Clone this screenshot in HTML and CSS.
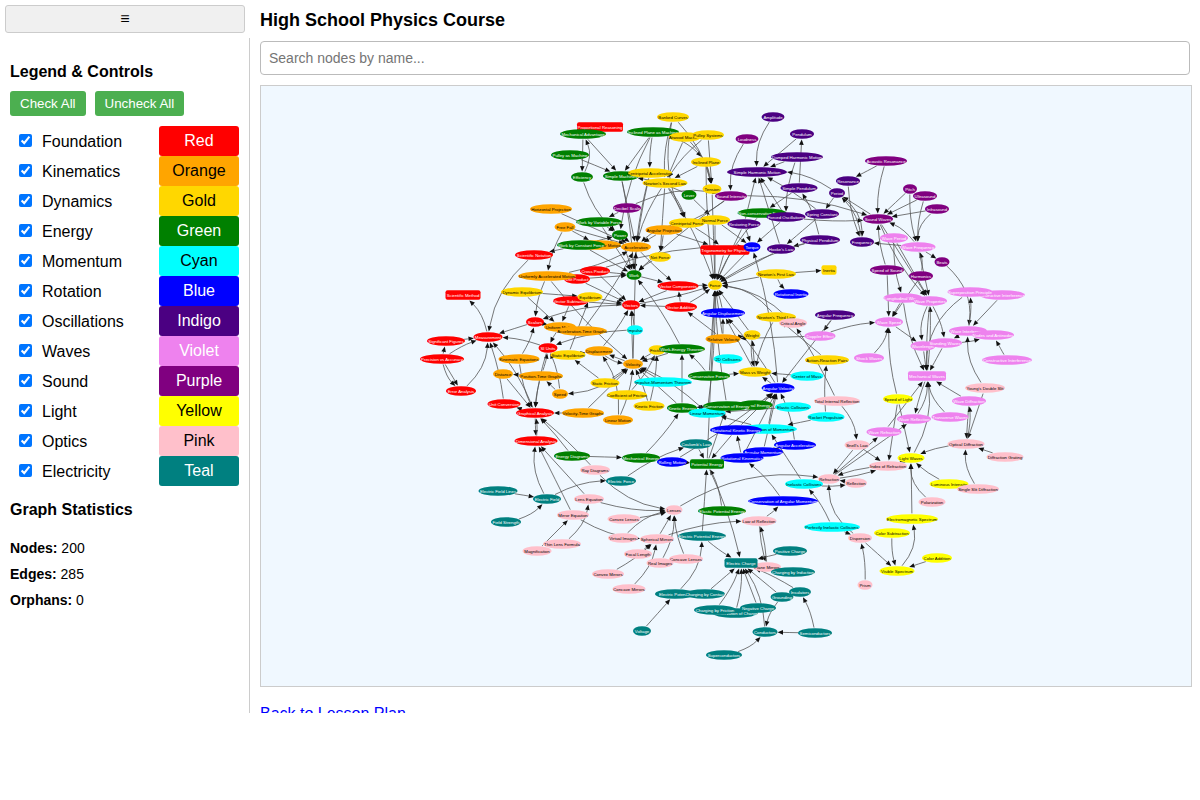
FILE: index.html
```html
<!DOCTYPE html>
<html lang="en">
<head>
<meta charset="utf-8">
<title>High School Physics Course</title>
<link rel="stylesheet" href="styles.css">
</head>
<body>
<div class="app">
  <aside class="sidebar">
    <button class="toggle" type="button">≡</button>
    <div class="panel">
      <h3 class="panel-title">Legend &amp; Controls</h3>
      <div class="actions">
        <button class="action" type="button">Check All</button>
        <button class="action" type="button">Uncheck All</button>
      </div>
      <div class="legend">
        <label class="legend-row"><input type="checkbox" checked><span class="legend-name">Foundation</span><span class="swatch s-red">Red</span></label>
        <label class="legend-row"><input type="checkbox" checked><span class="legend-name">Kinematics</span><span class="swatch s-orange">Orange</span></label>
        <label class="legend-row"><input type="checkbox" checked><span class="legend-name">Dynamics</span><span class="swatch s-gold">Gold</span></label>
        <label class="legend-row"><input type="checkbox" checked><span class="legend-name">Energy</span><span class="swatch s-green">Green</span></label>
        <label class="legend-row"><input type="checkbox" checked><span class="legend-name">Momentum</span><span class="swatch s-cyan">Cyan</span></label>
        <label class="legend-row"><input type="checkbox" checked><span class="legend-name">Rotation</span><span class="swatch s-blue">Blue</span></label>
        <label class="legend-row"><input type="checkbox" checked><span class="legend-name">Oscillations</span><span class="swatch s-indigo">Indigo</span></label>
        <label class="legend-row"><input type="checkbox" checked><span class="legend-name">Waves</span><span class="swatch s-violet">Violet</span></label>
        <label class="legend-row"><input type="checkbox" checked><span class="legend-name">Sound</span><span class="swatch s-purple">Purple</span></label>
        <label class="legend-row"><input type="checkbox" checked><span class="legend-name">Light</span><span class="swatch s-yellow">Yellow</span></label>
        <label class="legend-row"><input type="checkbox" checked><span class="legend-name">Optics</span><span class="swatch s-pink">Pink</span></label>
        <label class="legend-row"><input type="checkbox" checked><span class="legend-name">Electricity</span><span class="swatch s-teal">Teal</span></label>
      </div>
      <h3 class="stats-title">Graph Statistics</h3>
      <p class="stat"><b>Nodes:</b> 200</p>
      <p class="stat"><b>Edges:</b> 285</p>
      <p class="stat"><b>Orphans:</b> 0</p>
    </div>
  </aside>
  <main class="main">
    <h1 class="title">High School Physics Course</h1>
    <input class="search" type="text" placeholder="Search nodes by name...">
    <div class="graph"><svg id="graph" class="graph-svg" viewBox="261 86 930 600" xmlns="http://www.w3.org/2000/svg"></svg></div>
    <a class="back" href="#">Back to Lesson Plan</a>
  </main>
</div>
<script src="graph.js"></script>
</body>
</html>
```
FILE: styles.css
```css
* { box-sizing: border-box; }
html, body { margin: 0; padding: 0; background: #fff; }
body { font-family: "Liberation Sans", Arial, sans-serif; color: #000; }
.app { display: flex; height: 713px; overflow: hidden; }
.sidebar { width: 250px; flex: none; display: flex; flex-direction: column; }
.toggle { width: 240px; height: 28px; margin: 5px 5px 5px; flex: none; background: #f0f0f0; border: 1px solid #ccc; border-radius: 3px; font: 16px "Liberation Sans", Arial, sans-serif; color: #000; padding: 0; }
.panel { flex: 1; border-right: 1px solid #ccc; padding: 25px 10px 0; }
.panel-title { margin: 0; font-size: 16px; line-height: 18px; font-weight: 700; }
.actions { display: flex; gap: 9px; margin-top: 10px; }
.action { height: 25px; padding: 0 10px; background: #4caf50; color: #fff; border: 0; border-radius: 3px; font: 13.33px "Liberation Sans", Arial, sans-serif; }
.legend { margin-top: 10px; }
.legend-row { display: flex; align-items: center; height: 30px; font-size: 16px; padding-left: 9px; }
.legend-row input { width: 13px; height: 13px; margin: 0 0 1px; accent-color: #0075ff; }
.legend-name { margin-left: 10px; padding-top: 2px; flex: 1; }
.swatch { width: 80px; height: 30px; line-height: 29px; text-align: center; border-radius: 3px; margin-right: 0; }
.s-red { background: #f00; color: #fff; }
.s-orange { background: #ffa500; color: #000; }
.s-gold { background: #ffd700; color: #000; }
.s-green { background: #008000; color: #fff; }
.s-cyan { background: #0ff; color: #000; }
.s-blue { background: #00f; color: #fff; }
.s-indigo { background: #4b0082; color: #fff; }
.s-violet { background: #ee82ee; color: #fff; }
.s-purple { background: #800080; color: #fff; }
.s-yellow { background: #ff0; color: #000; }
.s-pink { background: #ffc0cb; color: #000; }
.s-teal { background: #008080; color: #fff; }
.stats-title { margin: 15px 0 16px; font-size: 16px; line-height: 18px; font-weight: 700; }
.stat { margin: 0; font-size: 14px; line-height: 26px; }
.main { flex: 1; padding-left: 10px; min-width: 0; }
.title { margin: 0; font-size: 18px; line-height: 21px; font-weight: 700; padding-top: 10px; height: 41px; }
.search { display: block; width: 930px; height: 34px; padding: 0 8px; border: 1px solid #bbb; border-radius: 4px; font: 14px "Liberation Sans", Arial, sans-serif; }
.search::placeholder { color: #757575; }
.graph { width: 932px; height: 602px; margin-top: 10px; background: #f0f8ff; border: 1px solid #ccc; }
.graph-svg { display: block; width: 930px; height: 600px; }
.back { display: block; margin-top: 18px; font-size: 16px; line-height: 18px; color: #00f; }
.edge { fill: none; stroke: #555; stroke-width: 0.8; }
.head { fill: #111; stroke: none; }
.label { font-family: "Liberation Sans", Arial, sans-serif; font-size: 4.3px; text-anchor: middle; dominant-baseline: central; }
.n-red { fill: #f00; } .n-orange { fill: #ffa500; } .n-gold { fill: #ffd700; } .n-green { fill: #008000; }
.n-cyan { fill: #0ff; } .n-blue { fill: #00f; } .n-indigo { fill: #4b0082; } .n-violet { fill: #ee82ee; }
.n-purple { fill: #800080; } .n-yellow { fill: #ff0; } .n-pink { fill: #ffc0cb; } .n-teal { fill: #008080; }
.t-light { fill: #fff; } .t-dark { fill: #000; }
```
FILE: graph.js
```js
var NODES = [
["Proportional Reasoning",600,127,46,"red",1],["Mechanical Advantage",583,134,46,"green"],["Inclined Plane as Machine",653,132,52,"green"],
["Pulley as Machine",570,155,38,"green"],["Efficiency",582,177,22,"green"],["Simple Machines",621,176,36,"green"],
["Horizontal Projection",551,209,42,"orange"],["Free Fall",565,227,21,"orange"],["Work by Variable Force",599,222,46,"green"],["Power",620,235,16,"green"],
["Uniform Circular Motion",598,245,46,"orange"],["Work by Constant Force",581,245,48,"green"],["Scientific Notation",534,255,38,"red"],["Decibel Scale",627,208,28,"purple"],
["Acceleration",636,247,30,"orange"],["Cross Product",595,271,30,"red"],["Dot Product",577,279,26,"red"],["Uniformly Accelerated Motion",547,276,58,"orange"],
["Vector Subtraction",571,301,36,"red"],["Equilibrium",590,297,25,"gold"],["Dynamic Equilibrium",522,292,42,"gold"],["Scientific Method",463,295,35,"red",1],
["Vectors",631,305,18,"red"],["Work",634,275,15,"green"],["Scalars",535,322,18,"red"],["Measurement",488,337,29,"red"],
["Significant Figures",446,341,38,"red"],["Precision vs Accuracy",442,359,44,"red"],["Error Analysis",461,391,30,"red"],["SI Units",548,348,19,"red"],
["Uniform Motion",560,327,32,"orange"],["Acceleration-Time Graphs",582,331,50,"orange"],["Impulse",635,330,16,"cyan"],["Static Equilibrium",568,355,35,"gold"],
["Displacement",599,351,28,"orange"],["Kinematic Equations",519,359,41,"orange"],["Distance",503,374,20,"orange"],["Position-Time Graphs",541,376,44,"orange"],
["Velocity",633,364,20,"orange"],["Static Friction",605,383,29,"gold"],["Speed",560,394,16,"orange"],["Coefficient of Friction",627,395,40,"gold"],
["Unit Conversion",504,404,33,"red"],["Graphical Analysis",535,413,38,"red"],["Velocity-Time Graphs",583,413,42,"orange"],["Linear Motion",618,420,30,"orange"],
["Kinetic Friction",649,406,31,"gold"],["Dimensional Analysis",536,441,43,"red"],
["Vector Components",678,286,41,"red"],["Force",715,285,14,"gold"],["Newton's First Law",776,274,40,"gold"],["Inertia",829,270,15,"gold",1],
["Rotational Inertia",791,294,35,"blue"],["Vector Addition",681,307,32,"red"],["Angular Displacement",723,313,44,"blue"],["Newton's Third Law",776,317,40,"gold"],
["Angular Frequency",835,315,40,"indigo"],["Critical Angle",793,323,28,"pink"],["Relative Velocity",723,339,35,"orange"],["Weight",752,335,17,"gold"],
["Doppler Effect",820,336,31,"violet"],["Friction",657,350,17,"gold"],["Work-Energy Theorem",682,349,46,"green"],["2D Collisions",728,359,29,"cyan"],
["Action-Reaction Pairs",827,360,44,"gold"],["Conservative Forces",709,376,42,"green"],["Mass vs Weight",755,372,33,"gold"],["Center of Mass",807,376,33,"cyan"],
["Impulse-Momentum Theorem",663,382,58,"cyan"],["Angular Velocity",778,388,33,"blue"],["Total Internal Reflection",837,401,46,"pink"],["Kinetic Energy",682,408,30,"green"],
["Thermal Energy",755,405,35,"green"],["Linear Momentum",707,413,37,"cyan"],["Conservation of Energy",727,406,48,"green"],["Elastic Collisions",793,407,36,"cyan"],
["Rocket Propulsion",826,417,37,"cyan"],["Conservation of Momentum",768,429,58,"cyan"],["Rotational Kinetic Energy",736,430,52,"blue"],["Coulomb's Law",696,444,32,"teal"],
["Angular Acceleration",795,445,42,"blue"],["Angular Momentum",763,452,40,"blue"],["Rotational Kinematics",742,458,43,"blue"],["Mechanical Energy",641,458,38,"green"],
["Rolling Motion",672,462,30,"blue"],["Potential Energy",707,464,34,"green",1],["Refraction",829,479,22,"pink"],["Inelastic Collisions",804,484,38,"cyan"],
["Reflection",856,483,22,"pink"],["Conservation of Angular Momentum",783,501,70,"blue"],["Elastic Potential Energy",722,511,48,"green"],["Law of Reflection",759,521,35,"pink"],
["Perfectly Inelastic Collisions",832,527,56,"cyan"],["Electric Potential Energy",702,536,48,"teal"],["Lenses",674,510,17,"pink"],["Spherical Mirrors",657,539,34,"pink"],
["Positive Charge",790,551,34,"teal"],["Plane Mirrors",767,567,28,"pink"],["Electric Charge",741,563,33,"teal",1],["Charging by Induction",793,572,44,"teal"],
["Concave Lenses",686,559,34,"pink"],["Real Images",660,563,27,"pink"],["Electric Potential",675,594,40,"teal"],["Charging by Contact",705,594,40,"teal"],
["Insulators",800,592,22,"teal"],["Grounding",782,597,23,"teal"],["Conservation of Charge",735,613,46,"teal"],["Charging by Friction",715,610,42,"teal"],["Negative Charge",758,608,36,"teal"],
["Conductors",765,632,25,"teal"],["Semiconductors",815,633,34,"teal"],["Voltage",642,631,18,"teal"],["Superconductors",724,655,36,"teal"],
["Energy Diagrams",572,456,36,"green"],["Ray Diagrams",595,470,30,"pink"],["Electric Force",621,481,30,"teal"],["Electric Field Lines",498,491,39,"teal"],
["Electric Field",547,499,28,"teal"],["Lens Equation",589,499,30,"pink"],["Field Strength",506,522,30,"teal"],["Mirror Equation",573,515,32,"pink"],
["Convex Lenses",624,519,33,"pink"],["Virtual Images",623,538,30,"pink"],["Thin Lens Formula",562,544,38,"pink"],["Magnification",537,551,29,"pink"],
["Focal Length",638,554,28,"pink"],["Convex Mirrors",608,574,32,"pink"],["Concave Mirrors",629,589,33,"pink"],
["Banked Curves",673,117,32,"gold"],["Amplitude",773,117,23,"indigo"],["Pendulum",802,134,24,"indigo"],["Atwood Machine",685,137,32,"gold"],["Pulley Systems",708,135,32,"gold"],
["Loudness",747,139,23,"purple"],["Inclined Plane",706,162,30,"gold"],["Damped Harmonic Motion",797,157,52,"indigo"],["Simple Harmonic Motion",757,172,60,"indigo"],
["Centripetal Acceleration",650,173,44,"gold"],["Newton's Second Law",665,183,45,"gold"],["Tension",712,189,19,"gold"],["Simple Pendulum",799,188,37,"indigo"],
["Lever",689,195,15,"green"],["Sound Intensity",731,196,32,"purple"],["Period",837,193,16,"indigo"],["Resonance",848,181,24,"indigo"],
["Non-conservative Forces",762,213,49,"green"],["Spring Constant",822,214,34,"indigo"],["Forced Oscillations",786,217,39,"indigo"],["Centripetal Force",687,223,36,"gold"],
["Normal Force",715,220,30,"gold"],["Restoring Force",744,224,33,"indigo"],["Angular Projection",664,230,37,"orange"],["Physical Pendulum",820,240,40,"indigo"],
["Net Force",660,257,22,"gold"],["Trigonometry for Physics",725,250,49,"red",1],["Torque",752,247,17,"blue"],["Hooke's Law",781,249,28,"indigo"],
["Acoustic Resonance",886,161,42,"purple"],["Pitch",910,189,14,"purple"],["Ultrasound",925,196,24,"purple"],["Infrasound",937,209,24,"purple"],["Sound Waves",878,219,30,"purple"],
["Frequency",862,242,24,"indigo"],["Wave Period",894,238,28,"violet"],["Wave Frequency",918,247,35,"violet"],["Beats",942,262,15,"purple"],["Speed of Sound",887,270,34,"purple"],
["Harmonics",921,276,24,"purple"],["Longitudinal Waves",903,298,39,"violet"],["Wave Properties",930,301,34,"violet"],["Destructive Interference",1002,295,46,"violet"],["Superposition Principle",970,292,45,"violet"],
["Wave Speed",889,322,28,"violet"],["Wave Interference",968,331,38,"violet"],["Nodes and Antinodes",993,335,42,"violet"],["Wavelength",923,346,25,"violet"],["Standing Waves",945,343,34,"violet"],
["Shock Waves",869,358,30,"violet"],["Constructive Interference",1007,360,50,"violet"],["Mechanical Waves",927,376,38,"violet",1],["Young's Double Slit",985,388,40,"pink"],["Speed of Light",898,399,30,"yellow"],
["Wave Diffraction",969,401,34,"violet"],["Wave Reflection",914,419,34,"violet"],["Transverse Waves",950,417,37,"violet"],["Wave Refraction",884,432,35,"violet"],["Optical Diffraction",966,444,37,"pink"],
["Snell's Law",857,445,25,"pink"],["Diffraction Grating",1005,457,37,"pink"],["Light Waves",911,458,27,"yellow"],["Index of Refraction",888,466,38,"pink"],["Luminous Intensity",949,484,39,"yellow"],
["Single Slit Diffraction",978,489,42,"pink"],["Polarization",932,502,27,"pink"],["Electromagnetic Spectrum",912,519,52,"yellow"],["Color Subtraction",892,533,36,"yellow"],["Dispersion",860,538,24,"pink"],
["Color Addition",937,558,30,"yellow"],["Visible Spectrum",897,571,35,"yellow"],["Prism",865,585,15,"pink"]
];

var EDGES = `
Mechanical Advantage>Efficiency|0
Efficiency>Mechanical Advantage|.15
Mechanical Advantage>Simple Machines|0
Pulley as Machine>Simple Machines|0
Inclined Plane as Machine>Simple Machines|0
Inclined Plane as Machine>Inclined Plane|-.1
Inclined Plane as Machine>Centripetal Acceleration|.03
Inclined Plane as Machine>Power|.05
Banked Curves>Tension|-.08
Banked Curves>Centripetal Force|.1
Banked Curves>Newton's Second Law|.05
Atwood Machine>Newton's Second Law|0
Atwood Machine>Tension|-.1
Pulley Systems>Tension|0
Pulley Systems>Newton's Second Law|.05
Inclined Plane>Newton's Second Law|0
Inclined Plane>Force|.02
Inclined Plane>Tension|0
Tension>Force|0
Normal Force>Force|0
Centripetal Force>Acceleration|.1
Centripetal Acceleration>Acceleration|.02
Centripetal Acceleration>Work|.02
Newton's Second Law>Force|-.03
Newton's Second Law>Acceleration|.05
Newton's Second Law>Centripetal Force|-.05
Newton's Second Law>Net Force|0
Lever>Simple Machines|.05
Lever>Normal Force|0
Efficiency>Power|.08
Simple Machines>Work|-.02
Simple Machines>Acceleration|0
Horizontal Projection>Acceleration|0
Free Fall>Acceleration|0
Free Fall>Uniform Circular Motion|0
Free Fall>Uniformly Accelerated Motion|.05
Work by Variable Force>Work|0
Work by Variable Force>Power|0
Decibel Scale>Work by Variable Force|0
Decibel Scale>Sound Intensity|-.1
Power>Work|0
Power>Acceleration|0
Work by Constant Force>Scientific Notation|0
Work by Constant Force>Work|0
Work by Constant Force>Power|0
Uniform Circular Motion>Acceleration|0
Scientific Notation>Measurement|.1
Net Force>Work|.05
Acceleration>Work|0
Acceleration>Vector Components|.02
Uniformly Accelerated Motion>Acceleration|.05
Uniformly Accelerated Motion>Velocity|.03
Uniformly Accelerated Motion>Scalars|.05
Dot Product>Vectors|0
Dot Product>Work|0
Cross Product>Vectors|0
Cross Product>Work|0
Cross Product>Torque|-.05
Vector Subtraction>Vectors|0
Equilibrium>Vectors|0
Dynamic Equilibrium>Equilibrium|0
Dynamic Equilibrium>Uniform Motion|0
Static Equilibrium>Equilibrium|0
Vectors>Scalars|.05
Vector Components>Vectors|0
Vector Addition>Vectors|0
Vectors>Force|.02
Vector Components>Force|0
Vector Addition>Vector Components|0
Vector Addition>Force|.03
Work>Vector Components|0
Vector Subtraction>Uniform Motion|0
Scalars>Uniform Motion|0
Acceleration-Time Graphs>Uniform Motion|0
Acceleration-Time Graphs>Acceleration|.02
Displacement>Vectors|.03
Uniform Motion>SI Units|.03
Scalars>Measurement|0
SI Units>Measurement|.05
Significant Figures>Measurement|0
Precision vs Accuracy>Significant Figures|0
Precision vs Accuracy>Error Analysis|0
Precision vs Accuracy>Error Analysis|.1
Precision vs Accuracy>Measurement|-.05
Error Analysis>Measurement|.12
Measurement>Scientific Method|.1
Graphical Analysis>Measurement|.05
Graphical Analysis>Unit Conversion|0
Unit Conversion>Measurement|.03
Graphical Analysis>Dimensional Analysis|0
Dimensional Analysis>Graphical Analysis|.05
Velocity-Time Graphs>Graphical Analysis|0
Position-Time Graphs>Graphical Analysis|.03
Position-Time Graphs>Distance|0
Position-Time Graphs>SI Units|.03
Kinematic Equations>Graphical Analysis|.05
Kinematic Equations>Scalars|.05
Distance>Graphical Analysis|0
SI Units>Graphical Analysis|.03
Static Equilibrium>Displacement|0
Static Friction>Static Equilibrium|0
Static Friction>Velocity|0
Velocity>Displacement|0
Displacement>Velocity|.1
Velocity>Speed|-.1
Speed>SI Units|.05
Speed>Position-Time Graphs|0
Velocity-Time Graphs>Velocity|0
Linear Motion>Displacement|.1
Linear Motion>Velocity|.05
Velocity>Acceleration|0
Velocity>Vectors|0
Impulse>SI Units|.05
Impulse>Vectors|0
Coefficient of Friction>Friction|.05
Kinetic Friction>Friction|.03
Friction>Velocity|0
Kinetic Friction>Velocity|.03
Impulse-Momentum Theorem>Velocity|0
Work-Energy Theorem>Velocity|0
Work-Energy Theorem>Work|.03
Conservative Forces>Work-Energy Theorem|.05
Conservative Forces>Mass vs Weight|0
Conservative Forces>Force|0
Kinetic Energy>Work-Energy Theorem|0
Kinetic Energy>Velocity|0
Kinetic Energy>Conservation of Energy|0
Conservation of Energy>Kinetic Energy|0
Conservation of Energy>Force|-.02
Thermal Energy>Conservation of Energy|0
Thermal Energy>Angular Velocity|.05
Linear Momentum>Velocity|.05
Linear Momentum>Kinetic Energy|0
Linear Momentum>Force|.02
Mechanical Energy>Kinetic Energy|.03
Energy Diagrams>Mechanical Energy|0
Mechanical Energy>Potential Energy|0
Rolling Motion>Potential Energy|0
Rolling Motion>Angular Velocity|.02
Potential Energy>Conservation of Energy|0
Potential Energy>Force|0
Electric Potential Energy>Potential Energy|0
Elastic Potential Energy>Potential Energy|.06
Coulomb's Law>Potential Energy|0
Rotational Kinetic Energy>Potential Energy|0
Rotational Kinetic Energy>Angular Velocity|0
Rotational Kinematics>Angular Velocity|0
Rotational Kinematics>Rotational Kinetic Energy|0
Angular Momentum>Angular Acceleration|0
Angular Momentum>Angular Velocity|0
Angular Acceleration>Angular Velocity|.05
Conservation of Angular Momentum>Rotational Kinematics|.05
Conservation of Momentum>Linear Momentum|0
Conservation of Momentum>Angular Velocity|-.03
Rocket Propulsion>Conservation of Momentum|0
Rocket Propulsion>Action-Reaction Pairs|-.03
Elastic Collisions>Linear Momentum|0
Inelastic Collisions>Conservation of Momentum|0
Angular Velocity>Angular Displacement|.03
Angular Velocity>Mass vs Weight|0
Angular Velocity>Torque|.03
Center of Mass>Mass vs Weight|0
Mass vs Weight>Weight|0
Weight>Mass vs Weight|.05
Weight>Force|0
Relative Velocity>Vector Addition|0
Relative Velocity>Angular Displacement|0
Relative Velocity>Weight|0
Relative Velocity>Force|0
Doppler Effect>Relative Velocity|0
Doppler Effect>Wave Speed|-.05
Angular Displacement>Force|.03
Mass vs Weight>Angular Displacement|0
Newton's First Law>Force|0
Newton's First Law>Inertia|0
Newton's First Law>Rotational Inertia|.1
Newton's Third Law>Force|.12
Newton's Third Law>Mass vs Weight|.05
Action-Reaction Pairs>Newton's Third Law|0
Total Internal Reflection>Critical Angle|.02
Critical Angle>Force|.1
Angular Frequency>Doppler Effect|0
Angular Frequency>Angular Velocity|0
Total Internal Reflection>Snell's Law|-.1
Snell's Law>Index of Refraction|0
Amplitude>Simple Harmonic Motion|.1
Loudness>Sound Intensity|.1
Damped Harmonic Motion>Simple Harmonic Motion|0
Pendulum>Simple Harmonic Motion|0
Simple Pendulum>Pendulum|0
Damped Harmonic Motion>Forced Oscillations|.05
Simple Pendulum>Non-conservative Forces|0
Period>Simple Harmonic Motion|.1
Period>Spring Constant|0
Frequency>Period|.1
Forced Oscillations>Simple Harmonic Motion|0
Spring Constant>Simple Harmonic Motion|.03
Hooke's Law>Simple Harmonic Motion|0
Restoring Force>Simple Harmonic Motion|0
Restoring Force>Torque|0
Forced Oscillations>Torque|0
Non-conservative Forces>Force|.05
Spring Constant>Hooke's Law|0
Physical Pendulum>Hooke's Law|0
Physical Pendulum>Simple Pendulum|.05
Physical Pendulum>Force|.05
Hooke's Law>Force|0
Torque>Force|0
Trigonometry for Physics>Force|0
Restoring Force>Force|0
Angular Projection>Trigonometry for Physics|0
Angular Projection>Acceleration|0
Angular Projection>Net Force|0
Centripetal Force>Trigonometry for Physics|-.03
Normal Force>Torque|0
Sound Intensity>Sound Waves|-.05
Sound Intensity>Angular Projection|-.05
Sound Intensity>Work|.02
Acoustic Resonance>Resonance|0
Acoustic Resonance>Sound Waves|.05
Resonance>Frequency|.05
Pitch>Sound Waves|0
Ultrasound>Sound Waves|0
Infrasound>Sound Waves|0
Pitch>Wave Frequency|.05
Ultrasound>Wave Frequency|.05
Infrasound>Wave Frequency|.15
Wave Frequency>Sound Waves|.1
Sound Waves>Period|0
Forced Oscillations>Sound Waves|.03
Wave Frequency>Frequency|0
Period>Frequency|-.15
Wave Frequency>Beats|0
Beats>Wave Interference|-.15
Speed of Sound>Sound Waves|-.04
Speed of Sound>Wave Speed|0
Harmonics>Wave Frequency|.08
Harmonics>Wave Speed|0
Sound Waves>Wave Properties|0
Sound Waves>Wave Properties|.05
Wave Frequency>Wave Properties|0
Wave Period>Longitudinal Waves|.05
Wave Period>Wave Properties|0
Wave Interference>Superposition Principle|.04
Destructive Interference>Wave Interference|0
Standing Waves>Nodes and Antinodes|.05
Wave Interference>Standing Waves|0
Wave Properties>Wavelength|.1
Mechanical Waves>Wave Properties|.02
Wave Properties>Mechanical Waves|.02
Wave Properties>Standing Waves|-.05
Longitudinal Waves>Wave Speed|0
Longitudinal Waves>Mechanical Waves|.05
Wave Speed>Wavelength|0
Shock Waves>Wave Speed|.1
Wavelength>Mechanical Waves|0
Standing Waves>Mechanical Waves|0
Superposition Principle>Mechanical Waves|.15
Constructive Interference>Nodes and Antinodes|0
Young's Double Slit>Wave Interference|-.1
Young's Double Slit>Optical Diffraction|0
Wave Diffraction>Mechanical Waves|0
Wave Diffraction>Optical Diffraction|0
Optical Diffraction>Wave Diffraction|.05
Transverse Waves>Mechanical Waves|-.1
Wave Reflection>Mechanical Waves|.1
Mechanical Waves>Wave Reflection|.02
Wave Refraction>Mechanical Waves|0
Light Waves>Mechanical Waves|.1
Speed of Light>Wave Speed|-.04
Speed of Light>Light Waves|0
Speed of Light>Index of Refraction|0
Optical Diffraction>Light Waves|.05
Diffraction Grating>Optical Diffraction|0
Single Slit Diffraction>Optical Diffraction|-.1
Luminous Intensity>Light Waves|-.05
Polarization>Light Waves|-.15
Electromagnetic Spectrum>Light Waves|0
Light Waves>Index of Refraction|0
Refraction>Wave Reflection|0
Refraction>Wave Refraction|0
Index of Refraction>Refraction|.05
Snell's Law>Refraction|0
Reflection>Refraction|0
Refraction>Index of Refraction|.04
Dispersion>Refraction|-.15
Perfectly Inelastic Collisions>Dispersion|0
Visible Spectrum>Electromagnetic Spectrum|.15
Color Subtraction>Visible Spectrum|.05
Dispersion>Visible Spectrum|0
Color Addition>Visible Spectrum|0
Prism>Dispersion|.04
Perfectly Inelastic Collisions>Inelastic Collisions|.05
Inelastic Collisions>Reflection|.05
Lenses>Refraction|-.1
Spherical Mirrors>Law of Reflection|-.05
Law of Reflection>Conservation of Angular Momentum|.05
Law of Reflection>Plane Mirrors|.03
Plane Mirrors>Law of Reflection|.03
Electric Field Lines>Electric Field|0
Field Strength>Electric Field|.1
Electric Field>Electric Force|-.08
Electric Force>Coulomb's Law|-.05
Electric Field>Dimensional Analysis|-.1
Mirror Equation>Dimensional Analysis|0
Lens Equation>Dimensional Analysis|0
Ray Diagrams>Lenses|.1
Energy Diagrams>Graphical Analysis|.02
Ray Diagrams>Graphical Analysis|.02
Thin Lens Formula>Lens Equation|.12
Magnification>Mirror Equation|0
Mirror Equation>Spherical Mirrors|.08
Lens Equation>Lenses|.05
Convex Lenses>Lenses|.03
Virtual Images>Lenses|-.1
Spherical Mirrors>Lenses|0
Real Images>Lenses|.08
Concave Lenses>Lenses|-.05
Focal Length>Spherical Mirrors|0
Convex Mirrors>Spherical Mirrors|.04
Concave Mirrors>Spherical Mirrors|.1
Potential Energy>Electric Charge|-.03
Electric Potential Energy>Electric Charge|.03
Electric Potential>Electric Potential Energy|.12
Voltage>Electric Potential|0
Charging by Contact>Electric Charge|0
Charging by Friction>Electric Charge|.05
Conservation of Charge>Electric Charge|.05
Negative Charge>Electric Charge|0
Positive Charge>Electric Charge|0
Charging by Induction>Electric Charge|.03
Grounding>Electric Charge|0
Grounding>Conductors|.08
Conductors>Electric Charge|.08
Insulators>Electric Charge|.03
Semiconductors>Insulators|.05
Semiconductors>Conductors|0
Superconductors>Conductors|.1
`;

(function () {
  var NS = "http://www.w3.org/2000/svg";
  var svg = document.getElementById("graph");
  var DARK = { orange: 1, gold: 1, cyan: 1, yellow: 1, pink: 1 };
  var H = 9.6;
  var index = {};
  NODES.forEach(function (n) { index[n[0]] = n; });

  function el(name, attrs) {
    var e = document.createElementNS(NS, name);
    for (var k in attrs) e.setAttribute(k, attrs[k]);
    svg.appendChild(e);
    return e;
  }
  function inside(n, x, y) {
    var dx = x - n[1], dy = y - n[2], rx = n[3] / 2, ry = H / 2 + 0.6;
    if (n[5]) return Math.abs(dx) <= rx && Math.abs(dy) <= ry;
    return (dx * dx) / (rx * rx) + (dy * dy) / (ry * ry) <= 1;
  }
  function point(a, c, b, t) {
    var u = 1 - t;
    return [u * u * a[1] + 2 * u * t * c[0] + t * t * b[1], u * u * a[2] + 2 * u * t * c[1] + t * t * b[2]];
  }
  EDGES.trim().split("\n").forEach(function (line) {
    var parts = line.split("|"), names = parts[0].split(">");
    var a = index[names[0]], b = index[names[1]], k = parseFloat(parts[1]);
    if (!a || !b) return;
    var dx = b[1] - a[1], dy = b[2] - a[2];
    var c = [(a[1] + b[1]) / 2 - dy * k * 2, (a[2] + b[2]) / 2 + dx * k * 2];
    var t1 = 1, t0 = 0;
    while (t1 > 0.5 && inside(b, point(a, c, b, t1)[0], point(a, c, b, t1)[1])) t1 -= 0.004;
    while (t0 < 0.5 && inside(a, point(a, c, b, t0)[0], point(a, c, b, t0)[1])) t0 += 0.004;
    var p0 = point(a, c, b, t0), p1 = point(a, c, b, t1);
    var pm = point(a, c, b, (t0 + t1) / 2);
    var cx = 2 * pm[0] - (p0[0] + p1[0]) / 2, cy = 2 * pm[1] - (p0[1] + p1[1]) / 2;
    var ang = Math.atan2(p1[1] - cy, p1[0] - cx);
    var L = 5.4, W = 2.3;
    var bx = p1[0] - Math.cos(ang) * L, by = p1[1] - Math.sin(ang) * L;
    el("path", { class: "edge", d: "M" + p0[0].toFixed(1) + " " + p0[1].toFixed(1) + "Q" + cx.toFixed(1) + " " + cy.toFixed(1) + " " + bx.toFixed(1) + " " + by.toFixed(1) });
    el("polygon", { class: "head", points: [p1[0], p1[1], bx - Math.sin(ang) * W, by + Math.cos(ang) * W, bx + Math.sin(ang) * W, by - Math.cos(ang) * W].map(function (v) { return v.toFixed(1); }).join(" ") });
  });
  NODES.forEach(function (n) {
    var fill = "n-" + n[4];
    if (n[5]) el("rect", { class: fill, x: n[1] - n[3] / 2, y: n[2] - H / 2, width: n[3], height: H, rx: 2 });
    else el("ellipse", { class: fill, cx: n[1], cy: n[2], rx: n[3] / 2, ry: H / 2 });
    var t = el("text", { class: "label " + (DARK[n[4]] ? "t-dark" : "t-light"), x: n[1], y: n[2] });
    t.textContent = n[0];
  });
})();
```
